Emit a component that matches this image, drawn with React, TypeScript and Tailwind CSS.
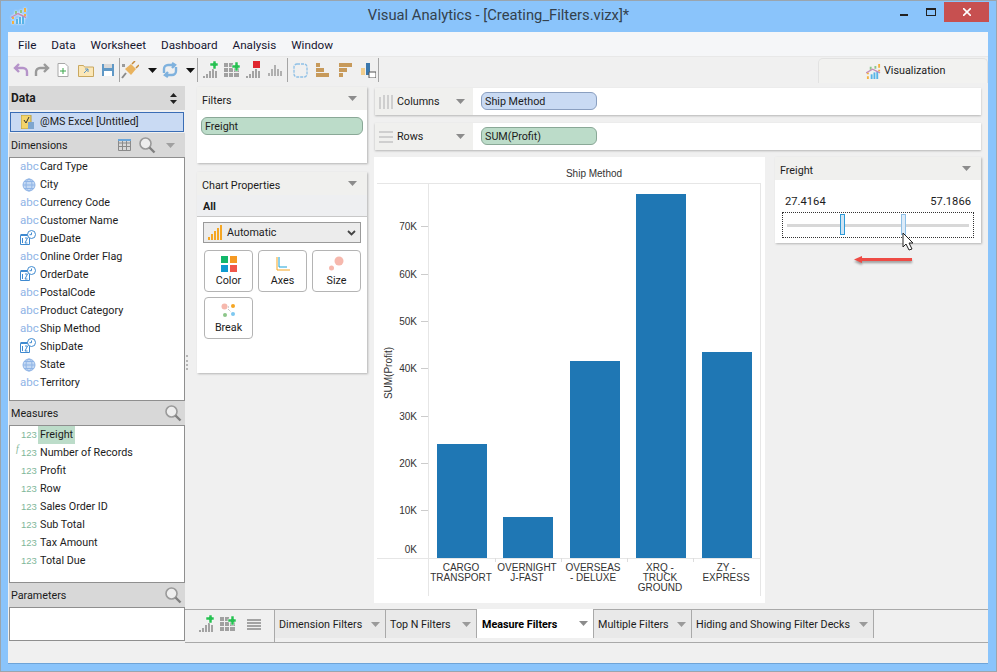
import React from 'react';

const dimensions = [
  ['abc', 'Card Type'], ['geo', 'City'], ['abc', 'Currency Code'], ['abc', 'Customer Name'],
  ['date', 'DueDate'], ['abc', 'Online Order Flag'], ['date', 'OrderDate'], ['abc', 'PostalCode'],
  ['abc', 'Product Category'], ['abc', 'Ship Method'], ['date', 'ShipDate'], ['geo', 'State'], ['abc', 'Territory'],
];
const measures = ['Freight', 'Number of Records', 'Profit', 'Row', 'Sales Order ID', 'Sub Total', 'Tax Amount', 'Total Due'];

function Caret({ className = 'fill-[#8c8c8c]' }: { className?: string }) {
  return (
    <svg width="9" height="5" viewBox="0 0 9 5" className={className}>
      <path d="M0 0h9L4.5 5z" />
    </svg>
  );
}

function Search() {
  return (
    <svg width="18" height="18" viewBox="0 0 18 18" fill="none">
      <circle cx="7.5" cy="7.5" r="5.5" stroke="#9a9a9a" strokeWidth="1.6" fill="#eee" />
      <path d="M11.5 11.5L16.5 16.5" stroke="#808080" strokeWidth="2.4" />
    </svg>
  );
}

function Bars({ mark }: { mark?: 'add' | 'del' }) {
  return (
    <svg width="16" height="18" viewBox="0 0 16 18">
      <path d="M1 15h2v2H1zM4 13h2v4H4zM7 10h2v7H7zM10 8h2v9h-2zM13 10h2v7h-2z" fill="#a3a3a3" />
      {mark === 'add' && <path d="M8 2h3V0h3v2h2v3h-2v3h-3V5H8z" fill="#27c052" stroke="#fff" strokeWidth=".5" />}
      {mark === 'del' && <path d="M8 0h7v7H8z" fill="#e0262e" />}
    </svg>
  );
}

function GridAdd() {
  return (
    <svg width="16" height="16" viewBox="0 0 16 16">
      <path d="M0 1h4v4H0zM5 1h4v4H5zM0 6h4v4H0zM5 6h4v4H5zM10 11h5v4h-5zM0 11h4v4H0zM5 11h4v4H5zM10 6h5v4h-5z" fill="#a0a0a0" />
      <path d="M8 3h3V0h3v3h2v3h-2v3h-3V6H8z" fill="#27c052" stroke="#fff" strokeWidth=".5" />
    </svg>
  );
}

function FieldIcon({ type }: { type: string }) {
  if (type === 'abc') return <span className="text-[11.500px] leading-none text-[#8fb4e6]">abc</span>;
  if (type === 'geo') {
    return (
      <svg width="14" height="14" viewBox="0 0 14 14" fill="none" stroke="#8fb4e6" strokeWidth="1" className="ml-[2px]">
        <circle cx="7" cy="7" r="6" fill="#c4d9f3" />
        <ellipse cx="7" cy="7" rx="3" ry="6" />
        <path d="M1 7h12M2 3.5h10M2 10.5h10" />
      </svg>
    );
  }
  return (
    <svg width="16" height="16" viewBox="0 0 16 16" fill="none" className="-mt-0.5">
      <path d="M0.5 5.5h9v9h-9z" fill="#fff" stroke="#3f8ad0" />
      <path d="M0.5 4h9v2h-9z" fill="#3f8ad0" />
      <path d="M2.5 8v5M5 8h2.5L5 13h2.5" stroke="#3f8ad0" strokeWidth="1" />
      <circle cx="11.5" cy="4.5" r="4" fill="#fff" stroke="#3f8ad0" />
      <path d="M11.5 2.5v2.2h-2" stroke="#3f8ad0" />
    </svg>
  );
}

function Logo({ size = 16, className }: { size?: number; className?: string }) {
  return (
    <svg width={size} height={size} viewBox="0 0 16 16" className={className}>
      <path d="M1 13h2v3H1zM1 9h2v2H1z" fill="#f4b13d" />
      <path d="M5 11h2v5H5z" fill="#57b4e8" />
      <path d="M8 9h2v7H8z" fill="#57b4e8" />
      <path d="M11 8h2v8h-2z" fill="#57b4e8" />
      <path d="M4 3h2v3H4zM9 2h2v3H9z" fill="#8cc68a" />
      <path d="M13 0h2v4h-2zM13 6h2v2h-2z" fill="#f4b13d" />
      <path d="M0 9.500L7 5.500l8 4" fill="none" stroke="#c58bb7" strokeWidth="1.400" />
    </svg>
  );
}

function Sep() {
  return <div className="mx-[3px] h-6 w-px bg-[#a5a5a5]" />;
}

function PanelHeader({ title }: { title: string }) {
  return (
    <div className="flex h-[23px] items-center justify-between bg-[#f0f0ee] pl-[5px] pr-[10px]">
      <span className="pt-[5px]">{title}</span>
      <Caret />
    </div>
  );
}

function SideHeader({ title, children }: { title: string; children?: React.ReactNode }) {
  return (
    <div className="flex h-6 shrink-0 items-center justify-between bg-[#d8d8d8] pl-[2px] pr-[3px]">
      <span className="pt-[2px]">{title}</span>
      {children}
    </div>
  );
}

function ChartButton({ label, children }: { label: string; children: React.ReactNode }) {
  return (
    <div className="flex h-[42px] w-[49px] flex-col items-center rounded-[4px] border border-[#b4b4b4] bg-white">
      <div className="flex h-[23px] items-center pt-[2px]">{children}</div>
      <span className="leading-[14px]">{label}</span>
    </div>
  );
}

function Tab({ label, active, w }: { label: string; active?: boolean; w: string }) {
  if (active) {
    return (
      <div className={`-mt-px flex h-[29px] items-center justify-between whitespace-nowrap border-r border-[#a9a9a9] bg-white pl-[5px] pr-[5px] font-bold ${w}`}>
        <span className="pt-[3px] text-black">{label}</span>
        <Caret />
      </div>
    );
  }
  return (
    <div className={`flex h-7 items-center justify-between whitespace-nowrap border-r border-[#a9a9a9] bg-[#e9e9e9] pl-[4px] pr-[5px] ${w}`}>
      <span className="pt-[3px]">{label}</span>
      <Caret className="fill-[#9a9a9a]" />
    </div>
  );
}

function Chart() {
  const ticks = [[226, '70K'], [274, '60K'], [321, '50K'], [368, '40K'], [416, '30K'], [463, '20K'], [510, '10K']] as const;
  const bars = [[437, 444], [503, 517], [570, 361], [636, 194], [702, 352]];
  const labels: [number, string[]][] = [
    [461, ['CARGO', 'TRANSPORT']], [527, ['OVERNIGHT', 'J-FAST']], [593, ['OVERSEAS', '- DELUXE']],
    [660, ['XRQ -', 'TRUCK', 'GROUND']], [726, ['ZY -', 'EXPRESS']],
  ];
  return (
    <svg width="391" height="446" viewBox="374 157 391 446" className="-ml-px bg-white" fontFamily="'Liberation Sans', sans-serif" fontSize="10" fill="#333">
      <text x="594" y="177" textAnchor="middle">Ship Method</text>
      <text x="0" y="0" transform="translate(392 373) rotate(-90)" textAnchor="middle">SUM(Profit)</text>
      <path d="M377 183.500h383M377 558.500h383M428.500 183v413M760.500 183v413" stroke="#e6e6e6" fill="none" />
      <path d="M495.500 558v4M561.500 558v4M627.500 558v4M693.500 558v4" stroke="#ddd" />
      {ticks.map(([y, t]) => (
        <g key={t}>
          <path d={`M421 ${y + 0.5}h7`} stroke="#ccc" />
          <text x="417" y={y + 4} textAnchor="end">{t}</text>
        </g>
      ))}
      <text x="417" y="553" textAnchor="end">0K</text>
      {bars.map(([x, top]) => (
        <rect key={x} x={x} y={top} width="50" height={558 - top} fill="#1f77b4" />
      ))}
      {labels.map(([x, lines]) =>
        lines.map((l, i) => (
          <text key={l} x={x} y={571 + i * 10} textAnchor="middle">{l}</text>
        )),
      )}
    </svg>
  );
}

export default function App() {
  return (
    <div className="flex h-[672px] w-[997px] flex-col overflow-hidden border border-[#9aa5ae] bg-[#8ac4fb] font-['Roboto',sans-serif] text-[10.750px] leading-none text-[#1c1c1c]">
      {/* Title bar */}
      <div className="relative flex h-[31px] shrink-0 items-center justify-center">
        <div className="absolute left-[10px] top-[7px]"><Logo className="drop-shadow-[0_0_1px_#fff]" /></div>
        <span className="-mt-[2px] text-[14.750px] text-[#33414d]">Visual Analytics - [Creating_Filters.vizx]*</span>
        <div className="absolute right-[7px] top-px flex items-start">
          <div className="mt-[12px] mr-[18px] h-[2px] w-2 bg-[#222]" />
          <div className="mt-[6px] mr-[8px] h-[8px] w-[10px] border border-t-2 border-[#222]" />
          <div className="flex h-5 w-[45px] items-center justify-center bg-[#c75050]">
            <svg width="8" height="8" viewBox="0 0 8 8" stroke="#fff" strokeWidth="1.600"><path d="M0 0l8 8M8 0L0 8" /></svg>
          </div>
        </div>
      </div>

      <div className="mb-[7px] ml-[7px] mr-[8px] flex min-h-0 flex-1 flex-col border-b border-[#6ea4d8] bg-[#f0f0f0]">
        {/* Menu */}
        <div className="flex h-6 shrink-0 items-center gap-[15px] bg-[#f5f6f8] pl-[10px] pt-[3px] text-[11.700px] text-[#151530]">
          {['File', 'Data', 'Worksheet', 'Dashboard', 'Analysis', 'Window'].map((m) => <span key={m}>{m}</span>)}
        </div>

        {/* Toolbar */}
        <div className="flex h-[27px] shrink-0 items-center border-t border-[#e8e8e8] pl-[5px]">
          <svg width="16" height="14" viewBox="0 0 16 14" fill="none" stroke="#b593c9" strokeWidth="2.400"><path d="M6 1L2 5l4 4M2 5h8a4 4 0 0 1 4 4v4" /></svg>
          <svg width="16" height="14" viewBox="0 0 16 14" fill="none" stroke="#9a9a9a" strokeWidth="2.400" className="ml-[5px]"><path d="M10 1l4 4-4 4M14 5H6a4 4 0 0 0-4 4v4" /></svg>
          <svg width="16" height="16" viewBox="0 0 16 16" fill="#fff" stroke="#a8a8a8" className="ml-[5px]"><path d="M3 1.500h7l3 3v10H3z" /><path d="M8 6v6M5 9h6" stroke="#3aa54a" /></svg>
          <svg width="16" height="14" viewBox="0 0 16 14" className="ml-[7px]" fill="#fbe7b7" stroke="#c9a860"><path d="M.5 2.500h5l1 1.500h9v9.500H.5z" /><path d="M6 10l4-4M7 6h3v3" stroke="#5b93c4" fill="none" /></svg>
          <svg width="16" height="16" viewBox="0 0 16 16" className="ml-[6px]"><path d="M2 2h12v12H2z" fill="#5f98c6" /><path d="M4 2h8v4H4z" fill="#d8d8d8" /><path d="M4 9h8v5H4z" fill="#fff" /></svg>
          <Sep />
          <svg width="18" height="18" viewBox="0 0 18 18" className="-ml-[2px]"><path d="M1 17l4-5" stroke="#8a8a8a" strokeWidth="2" /><path d="M4 8l6-5 5 5-5 6z" fill="#e9b35f" /><path d="M11 3l3-3M15 7l3-3" stroke="#c58a3a" strokeWidth="1.500" /><path d="M1 3h3v3H1z" fill="#9a9a9a" /></svg>
          <div className="ml-[9px]"><Caret className="fill-[#111]" /></div>
          <svg width="16" height="16" viewBox="0 0 16 16" fill="none" stroke="#7fb2de" strokeWidth="2.400" className="ml-[5px]"><path d="M2 11V7a4 4 0 0 1 4-4h6M14 5v4a4 4 0 0 1-4 4H4M10 1l3 2-3 3M6 10l-3 3 3 2" /></svg>
          <div className="ml-[8px]"><Caret className="fill-[#111]" /></div>
          <div className="-ml-px"><Sep /></div>
          <div className="ml-px"><Bars mark="add" /></div>
          <div className="ml-[6px]"><GridAdd /></div>
          <div className="ml-[5px]"><Bars mark="del" /></div>
          <svg width="14" height="14" viewBox="0 0 14 14" className="ml-[7px]"><path d="M0 10h2v3H0zM3 6h2v7H3zM6 2h2v11H6zM9 6h2v7H9zM12 8h2v5h-2z" fill="#b0b0b0" /></svg>
          <div className="ml-[2px]"><Sep /></div>
          <svg width="15" height="15" viewBox="0 0 15 15" fill="none" stroke="#8fc0e6" strokeWidth="1.300" strokeDasharray="3 1" className="ml-[2px]"><rect x="1" y="1" width="13" height="13" rx="3" /></svg>
          <svg width="13" height="14" viewBox="0 0 13 14" fill="#c79a5b" className="ml-[8px]"><path d="M0 0h4v4H0zM0 5h8v4H0zM0 10h13v4H0z" /></svg>
          <svg width="14" height="14" viewBox="0 0 14 14" fill="#c79a5b" className="ml-[10px]"><path d="M0 0h13v4H0zM0 5h8v4H0zM0 10h4v4H0z" /></svg>
          <svg width="15" height="15" viewBox="0 0 15 15" className="ml-[8px]"><path d="M0 5h4v7H0z" fill="#f1cd8c" /><path d="M5 0h4v12H5z" fill="#3b78ad" /><path d="M8 9h7v6H8z" fill="#fff" stroke="#555" /></svg>
          <div className="-ml-px"><Sep /></div>
          <div className="ml-auto flex h-[25px] w-[170px] items-center gap-[3px] self-end rounded-t-[5px] border border-b-0 border-[#e2e2e2] bg-[#f2f2f0] pl-[47px]">
            <Logo size={15} />
            <span>Visualization</span>
          </div>
        </div>

        {/* Main */}
        <div className="relative flex min-h-0 flex-1">
          <div className="absolute left-[178px] top-[272px] h-[15px] border-l-2 border-dotted border-[#b5b5b5]" />
          {/* Data pane */}
          <div className="flex w-[177px] shrink-0 flex-col pl-px pt-[3px]">
            <div className="flex h-6 shrink-0 items-center justify-between bg-[#d8d8d8] pl-[2px] pr-[8px] text-[12px] font-bold">
              <span>Data</span>
              <svg width="7" height="11" viewBox="0 0 7 11" fill="#222"><path d="M3.500 0L7 4H0zM3.500 11L0 7h7z" /></svg>
            </div>
            <div className="mt-px flex h-[22px] shrink-0 items-center border-2 border-[#f0f0f0] bg-[#c9daf3] pl-[10px] outline outline-offset-[-2px] outline-[#3a6db5]">
              <svg width="14" height="14" viewBox="0 0 14 14"><path d="M0 0h10v14H0z" fill="#f3d46b" stroke="#b59a3e" /><path d="M3 5l2 3 3-6" stroke="#333" fill="none" /><path d="M7 7h6v7H7z" fill="#7ea6cf" /></svg>
              <span className="ml-[5px] text-[#222]">@MS Excel [Untitled]</span>
            </div>
            <SideHeader title="Dimensions">
              <div className="flex items-center gap-[7px] pr-[7px]">
                <svg width="13" height="12" viewBox="0 0 13 12" fill="none" stroke="#8a8a8a"><path d="M.5.500h12v11H.500zM.5 4h12M.5 7.500h12M4.500 2v9.500M8.500 2v9.500" /><path d="M0 0h13v2H0z" fill="#6aa6da" stroke="none" /></svg>
                <Search />
                <div className="ml-[3px]"><Caret className="fill-[#a0a0a0]" /></div>
              </div>
            </SideHeader>
            <div className="h-[244px] shrink-0 border border-[#8f8f8f] bg-white">
              {dimensions.map(([type, name]) => (
                <div key={name} className="flex h-[18px] items-center">
                  <div className="w-[30px] shrink-0 pl-[10px]"><FieldIcon type={type} /></div>
                  <span>{name}</span>
                </div>
              ))}
            </div>
            <SideHeader title="Measures"><Search /></SideHeader>
            <div className="h-[158px] shrink-0 border border-[#8f8f8f] bg-white">
              {measures.map((name, i) => (
                <div key={name} className="flex h-[18px] items-center">
                  <div className="relative w-[28px] shrink-0 pl-[11px] font-['Liberation_Sans',sans-serif] text-[9.500px] text-[#7fb79a]">
                    {i === 1 && <span className="absolute left-[6px] -top-[3px] font-['Liberation_Serif',serif] italic">f</span>}
                    123
                  </div>
                  <span className={`flex h-[18px] items-center px-[2px] ${i === 0 ? 'bg-[#bcdcc9]' : ''}`}>{name}</span>
                </div>
              ))}
            </div>
            <SideHeader title="Parameters"><Search /></SideHeader>
            <div className="h-[34px] shrink-0 border border-[#8f8f8f] bg-white" />
          </div>

          <div className="flex min-w-0 flex-1 flex-col">
            <div className="flex min-h-0 flex-1">
              {/* Filters + chart properties */}
              <div className="ml-[12px] flex w-[170px] shrink-0 flex-col gap-[9px] pt-[4px]">
                <div className="h-[76px] bg-white shadow-[1px_1px_2px_#b5b5b5]">
                  <PanelHeader title="Filters" />
                  <div className="mx-[4px] mt-[7px] flex h-[18px] items-center rounded-[6px] border border-[#8aa897] bg-[#bcdcc9] pl-[3px] pt-[2px]">Freight</div>
                </div>
                <div className="h-[201px] bg-white shadow-[1px_1px_2px_#b5b5b5]">
                  <PanelHeader title="Chart Properties" />
                  <div className="flex h-[22px] items-center border-b border-[#c8c8c8] bg-[#eeeff1] pl-[6px] pt-[4px] font-bold">All</div>
                  <div className="mx-[6px] mt-[5px] flex h-[21px] items-center justify-between border border-[#9a9a9a] bg-[#ececec] pl-[4px] pr-[4px]">
                    <div className="flex items-center gap-[4px]">
                      <svg width="15" height="15" viewBox="0 0 15 15" fill="#f5a623"><path d="M0 12h2v3H0zM3 9h2v6H3zM6 6h2v9H6zM9 3h2v12H9zM12 0h2v15h-2z" /></svg>
                      <span className="pt-[2px]">Automatic</span>
                    </div>
                    <svg width="9" height="6" viewBox="0 0 9 6" fill="none" stroke="#444" strokeWidth="1.800"><path d="M1 1l3.500 3.500L8 1" /></svg>
                  </div>
                  <div className="ml-[7px] mt-[7px] grid w-[157px] grid-cols-[49px_49px_49px] gap-x-[5px] gap-y-[5px]">
                    <ChartButton label="Color">
                      <svg width="16" height="16" viewBox="0 0 16 16"><path d="M0 0h7v7H0z" fill="#12b76a" /><path d="M9 0h7v7H9z" fill="#f59a23" /><path d="M0 9h7v7H0z" fill="#0f9bd0" /><path d="M9 9h7v7H9z" fill="#f0564a" /></svg>
                    </ChartButton>
                    <ChartButton label="Axes">
                      <svg width="14" height="14" viewBox="0 0 14 14" fill="none"><path d="M1 0v13h13" stroke="#f5a623" /><path d="M3 0v10h8" stroke="#1aa3d9" /></svg>
                    </ChartButton>
                    <ChartButton label="Size">
                      <svg width="15" height="15" viewBox="0 0 15 15" fill="#f6b8ad"><circle cx="10" cy="5" r="4.500" /><circle cx="2.500" cy="12" r="2.500" /></svg>
                    </ChartButton>
                    <ChartButton label="Break">
                      <svg width="15" height="15" viewBox="0 0 15 15"><circle cx="3.500" cy="3.500" r="3" fill="#f6b8ad" /><circle cx="12" cy="3" r="2" fill="#f5a623" /><circle cx="4" cy="12" r="2" fill="#8cc68a" /><circle cx="12" cy="11" r="2" fill="#7ec8f0" /><path d="M7 4h2M7 6l3 3" stroke="#aaa" strokeDasharray="1 1" /></svg>
                    </ChartButton>
                  </div>
                </div>
              </div>

              {/* Shelves, chart, filter card */}
              <div className="ml-[8px] flex w-[606px] shrink-0 flex-col">
                <div className="mt-[5px] flex h-[27px] shrink-0 bg-white shadow-[0_1px_2px_#b5b5b5]">
                  <div className="flex w-[98px] items-center justify-between bg-[#f0f0ee] pl-[4px] pr-[8px]">
                    <div className="flex items-center gap-[4px]">
                      <svg width="14" height="14" viewBox="0 0 14 14" fill="#cfcfcf"><path d="M0 2h2v12H0zM4 0h2v14H4zM8 0h2v14H8zM12 0h2v14h-2z" /></svg>
                      <span className="pt-[2px]">Columns</span>
                    </div>
                    <Caret />
                  </div>
                  <div className="ml-[8px] mt-[4px] flex h-[18px] w-[116px] items-center rounded-[6px] border border-[#8a9fc0] bg-[#c9daf3] pl-[3px] pt-[2px]">Ship Method</div>
                </div>
                <div className="mt-[8px] flex h-[27px] shrink-0 bg-white shadow-[0_1px_2px_#b5b5b5]">
                  <div className="flex w-[98px] items-center justify-between bg-[#f0f0ee] pl-[4px] pr-[8px]">
                    <div className="flex items-center gap-[4px]">
                      <svg width="14" height="14" viewBox="0 0 14 14" fill="#cfcfcf"><path d="M0 1h14v2H0zM0 6h14v2H0zM0 11h14v2H0z" /></svg>
                      <span className="pt-[2px]">Rows</span>
                    </div>
                    <Caret />
                  </div>
                  <div className="ml-[8px] mt-[4px] flex h-[18px] w-[116px] items-center rounded-[6px] border border-[#8aa897] bg-[#bcdcc9] pl-[3px] pt-[2px]">SUM(Profit)</div>
                </div>
                <div className="mt-[7px] flex gap-[10px]">
                  <Chart />
                  <div className="relative flex-1">
                    <div className="h-[86px] bg-white shadow-[1px_1px_2px_#b5b5b5]">
                      <PanelHeader title="Freight" />
                      <div className="flex justify-between px-[10px] pt-[16px] text-[11.200px] leading-[12px]">
                        <span>27.4164</span>
                        <span>57.1866</span>
                      </div>
                      <div className="relative mx-[7px] mt-[4px] flex h-[26px] items-center border border-dotted border-[#333] px-[4px]">
                        <div className="h-[3px] w-full bg-[#d8d8d8]" />
                        <div className="absolute left-[57px] top-px h-[21px] w-[5px] border border-[#2f9bd8] bg-[#cfe3f2]" />
                        <div className="absolute left-[118px] top-px h-[21px] w-[5px] border border-[#8fc0e6] bg-[#dcebf9]" />
                      </div>
                    </div>
                    <svg width="13" height="19" viewBox="0 0 13 19" className="absolute left-[127px] top-[75px]">
                      <path d="M1 1v14l3-3 3 6 3-1-3-6h4z" fill="#fff" stroke="#222" />
                    </svg>
                    <div className="ml-[78px] mt-[11px] flex items-center">
                      <svg width="60" height="11" viewBox="0 0 60 11" className="drop-shadow-[0_2px_1px_#999]">
                        <path d="M1 5.500L9 2v2h50v3H9v2z" fill="#ee4b45" />
                      </svg>
                    </div>
                  </div>
                </div>
              </div>
            </div>

            {/* Sheet tabs */}
            <div className="mt-[5px] flex h-[34px] shrink-0 border-y border-[#a9a9a9]">
              <div className="flex h-7 w-[89px] shrink-0 items-center pl-[13px]">
                <Bars mark="add" />
                <div className="ml-[6px]"><GridAdd /></div>
                <svg width="14" height="11" viewBox="0 0 14 11" fill="#a3a3a3" className="ml-[11px]"><path d="M0 0h14v2H0zM0 3h14v2H0zM0 6h14v2H0zM0 9h14v2H0z" /></svg>
              </div>
              <div className="flex items-start border-l border-[#a9a9a9]">
                <Tab label="Dimension Filters" w="w-[111px]" />
                <Tab label="Top N Filters" w="w-[91px]" />
                <Tab label="Measure Filters" active w="w-[117px]" />
                <Tab label="Multiple Filters" w="w-[98px]" />
                <Tab label="Hiding and Showing Filter Decks" w="w-[182px]" />
              </div>
            </div>
          </div>
        </div>

        {/* Status bar */}
        <div className="h-[20px] shrink-0 bg-[#f0f0f0]" />
      </div>
    </div>
  );
}
